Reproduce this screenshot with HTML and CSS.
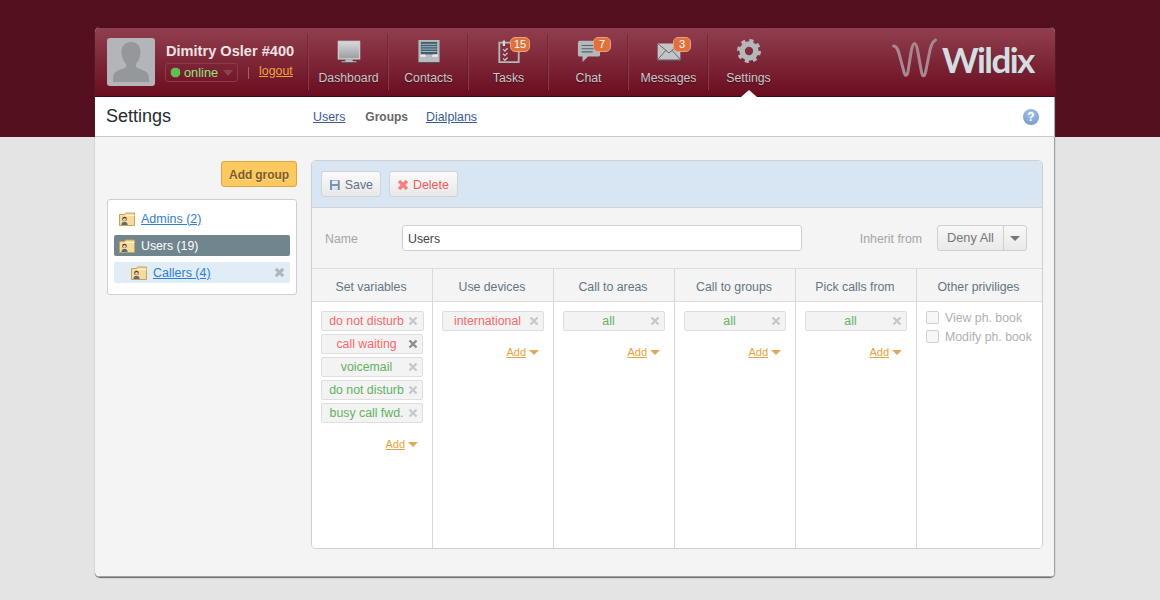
FILE: index.html
```html
<!DOCTYPE html>
<html lang="en">
<head>
<meta charset="utf-8">
<title>Settings</title>
<link rel="stylesheet" href="styles.css">
</head>
<body>
<svg class="defs" width="0" height="0">
  <symbol id="folder" viewBox="0 0 16 14">
    <path d="M.5 2.500h5l1-1.500h9v12.500H.5z" fill="#f5dc9c" stroke="#c4a35a"/>
    <path d="M6.500 3.500h9" stroke="#fff6d8"/>
    <circle cx="5.500" cy="7" r="2.300" fill="#5a3a2a"/>
    <circle cx="5.500" cy="7.500" r="1.500" fill="#f2c9a8"/>
    <path d="M2.300 13c.3-2.500 1.500-3 3.200-3s2.900.5 3.200 3z" fill="#5b6c7a"/>
  </symbol>
  <symbol id="cross" viewBox="0 0 10 10">
    <path d="M1.500 1.500l7 7M8.500 1.500l-7 7" stroke="currentColor" stroke-width="2.400"/>
  </symbol>
  <symbol id="crossb" viewBox="0 0 12 12">
    <path d="M2 2l8 8M10 2l-8 8" stroke="currentColor" stroke-width="3.400"/>
  </symbol>
</svg>
<div class="card">
  <header class="top">
    <div class="avatar">
      <svg width="48" height="48" viewBox="0 0 48 48"><path d="M24 4c6 0 9.500 4 9.500 10 0 5-2 9-4.500 12v3c3 2.500 10 3 12 7 1 2 1 5 1 8H6c0-3 0-6 1-8 2-4 9-4.500 12-7v-3c-2.500-3-4.500-7-4.500-12C14.500 8 18 4 24 4z" fill="#94979b"/></svg>
    </div>
    <div class="user">
      <div class="uname">Dimitry Osler #400</div>
      <div class="ustatus">
        <span class="pill"><i class="dot"></i>online<i class="pcaret"></i></span>
        <span class="sep"></span>
        <a class="logout">logout</a>
      </div>
    </div>
    <nav class="nav">
      <a class="nitem">
        <span class="nicon"><svg width="24" height="23" viewBox="0 0 26 25"><defs><linearGradient id="s" x1="0" y1="0" x2="0" y2="1"><stop offset="0" stop-color="#d8d9da"/><stop offset="1" stop-color="#9b9c9e"/></linearGradient></defs><rect x="1.500" y="1.500" width="23" height="19" fill="url(#s)" stroke="#c9cdd0" stroke-width="1.500"/><path d="M9 21h8v2h4v1.500H5V23h4z" fill="#b7babd"/><path d="M5 24.500h16" stroke="#4e5a62"/></svg></span>
        <span class="nlabel">Dashboard</span>
      </a>
      <a class="nitem">
        <span class="nicon"><svg width="22" height="23" viewBox="0 0 22 24"><rect y="0" width="22" height="23" fill="#b9bcbf"/><rect x="2.500" y="2" width="17" height="13" fill="#41606e"/><path d="M3 4.500h16M3 7h16M3 9.500h16M3 12h16" stroke="#a7bac3"/><path d="M2 15h5l1 2.500h6l1-2.500h5v2.500H2z" fill="#ecedee"/><path d="M0 23.500h22" stroke="#4e5a62"/></svg></span>
        <span class="nlabel">Contacts</span>
      </a>
      <a class="nitem">
        <span class="nicon"><svg width="22" height="24" viewBox="0 0 23 26"><path d="M1 4h21v21H1z" fill="none" stroke="#b3b7ba" stroke-width="2"/><path d="M6 1.500v6" stroke="#d5d7d9" stroke-width="2.500"/><path d="M5 11l2 2 3-3M5 16l2 2 3-3M5 21l2 2 3-3" fill="none" stroke="#c4c7ca" stroke-width="1.400"/></svg></span>
        <span class="badge badge-wide">15</span>
        <span class="nlabel">Tasks</span>
      </a>
      <a class="nitem">
        <span class="nicon"><svg width="24" height="24" viewBox="0 0 26 26"><path d="M3 2h20q2 0 2 2v13q0 2-2 2H12l-6 6v-6H3q-2 0-2-2V4q0-2 2-2z" fill="#b4b8bb"/><path d="M5 7h14M5 10.500h16M5 14h12" stroke="#4a6470" stroke-width="1.200"/></svg></span>
        <span class="badge">7</span>
        <span class="nlabel">Chat</span>
      </a>
      <a class="nitem">
        <span class="nicon nicon-mail"><svg width="24" height="18" viewBox="0 0 25 19"><rect x=".5" y=".5" width="24" height="17" fill="#c2c4c6"/><path d="M.5.500l12 10 12-10M.5 17.500l9-10M24.500 17.500l-9-10" fill="none" stroke="#5e6468"/><path d="M0 18.500h25" stroke="#4e5a62"/></svg></span>
        <span class="badge">3</span>
        <span class="nlabel">Messages</span>
      </a>
      <a class="nitem nitem-active">
        <span class="nicon"><svg width="24" height="24" viewBox="0 0 26 26"><circle cx="13" cy="13" r="7.500" fill="none" stroke="#b5b8bb" stroke-width="6"/><circle cx="13" cy="13" r="11" fill="none" stroke="#b5b8bb" stroke-width="4" stroke-dasharray="4.300 4.340"/></svg></span>
        <span class="nlabel">Settings</span>
      </a>
    </nav>
    <div class="logo">
      <svg class="logomark" width="46" height="42" viewBox="0 0 46 42"><path d="M2.500 8c3.500 0 5 5 6.500 11l4 15c1.200 4.500 3 4.500 4-.5l3-19c1-6 2-9 3.500-9s2.500 3 3.500 9l3.500 19.500c1 5 3 5 4 .5l4-20c1-6 2-10 6-12.500" fill="none" stroke="#a98790" stroke-width="3" stroke-linecap="round"/></svg>
      <span class="logotext">Wildix</span>
    </div>
  </header>
  <div class="sub">
    <h1 class="title">Settings</h1>
    <a class="slink">Users</a>
    <span class="scur">Groups</span>
    <a class="slink">Dialplans</a>
    <span class="help">?</span>
  </div>
  <main class="main">
    <aside class="side">
      <div class="sidetop"><button class="addgroup">Add group</button></div>
      <ul class="tree">
        <li class="node"><svg class="fold"><use href="#folder"/></svg><a class="nlink">Admins (2)</a></li>
        <li class="node node-sel"><svg class="fold"><use href="#folder"/></svg>Users (19)</li>
        <li class="node node-child"><svg class="fold"><use href="#folder"/></svg><a class="nlink">Callers (4)</a><svg class="ncross"><use href="#crossb"/></svg></li>
      </ul>
    </aside>
    <section class="panel">
      <div class="tools">
        <button class="tbtn tsave"><svg width="12" height="12" viewBox="0 0 12 12"><path d="M1 1h9l1 1v9H1z" fill="#7d8fb0"/><rect x="3" y="1.500" width="6" height="3.500" fill="#e8edf4"/><rect x="3" y="7" width="6" height="4" fill="#dfe5ee"/></svg>Save</button>
        <button class="tbtn tdel"><svg class="delx" width="12" height="12"><use href="#crossb"/></svg>Delete</button>
      </div>
      <div class="namerow">
        <label class="lbl lbl-name">Name</label>
        <div class="inp">Users</div>
        <label class="lbl lbl-inh">Inherit from</label>
        <div class="sel"><span class="seltxt">Deny All</span><span class="selbtn"><i class="selcaret"></i></span></div>
      </div>
      <div class="cols">
        <div class="col">
          <div class="colh">Set variables</div>
          <div class="colb">
            <div class="tag red tag-first"><span class="tt">do not disturb</span><svg class="x"><use href="#cross"/></svg></div>
            <div class="tag red"><span class="tt">call waiting</span><svg class="x x-hover"><use href="#cross"/></svg></div>
            <div class="tag green"><span class="tt">voicemail</span><svg class="x"><use href="#cross"/></svg></div>
            <div class="tag green"><span class="tt">do not disturb</span><svg class="x"><use href="#cross"/></svg></div>
            <div class="tag green"><span class="tt">busy call fwd.</span><svg class="x"><use href="#cross"/></svg></div>
            <div class="add"><a class="addl">Add</a><i class="addc"></i></div>
          </div>
        </div>
        <div class="col">
          <div class="colh">Use devices</div>
          <div class="colb">
            <div class="tag red"><span class="tt">international</span><svg class="x"><use href="#cross"/></svg></div>
            <div class="add"><a class="addl">Add</a><i class="addc"></i></div>
          </div>
        </div>
        <div class="col">
          <div class="colh">Call to areas</div>
          <div class="colb">
            <div class="tag green"><span class="tt">all</span><svg class="x"><use href="#cross"/></svg></div>
            <div class="add"><a class="addl">Add</a><i class="addc"></i></div>
          </div>
        </div>
        <div class="col">
          <div class="colh">Call to groups</div>
          <div class="colb">
            <div class="tag green"><span class="tt">all</span><svg class="x"><use href="#cross"/></svg></div>
            <div class="add"><a class="addl">Add</a><i class="addc"></i></div>
          </div>
        </div>
        <div class="col">
          <div class="colh">Pick calls from</div>
          <div class="colb">
            <div class="tag green"><span class="tt">all</span><svg class="x"><use href="#cross"/></svg></div>
            <div class="add"><a class="addl">Add</a><i class="addc"></i></div>
          </div>
        </div>
        <div class="col col-last">
          <div class="colh">Other priviliges</div>
          <div class="colb colb-last">
            <div class="chk"><i class="box"></i>View ph. book</div>
            <div class="chk"><i class="box"></i>Modify ph. book</div>
          </div>
        </div>
      </div>
    </section>
  </main>
</div>
</body>
</html>
```
FILE: styles.css
```css
* { box-sizing: border-box; }
html, body { margin: 0; height: 600px; overflow: hidden; }
body {
  background: linear-gradient(#55101f 137px, #e4e4e4 137px);
  font: 12.3px "Liberation Sans", Arial, sans-serif;
  color: #333;
  padding-top: 27px;
}
.defs { position: absolute; }
.card {
  width: 960px;
  height: 550px;
  margin: 0 0 0 95px;
  background: #f4f4f4;
  border-radius: 5px;
  box-shadow: 0 1px 1px #666;
  overflow: hidden;
}
.top {
  height: 70px;
  display: flex;
  align-items: flex-start;
  background: linear-gradient(#903f4e, #6a0d20);
  border-bottom: 1px solid #3e0a15;
  border-top: 1px solid #4a0f1c;
  padding: 10px 0 0 12px;
  position: relative;
}
.avatar {
  width: 48px;
  height: 48px;
  border-radius: 3px;
  background: #b3b5b9;
  overflow: hidden;
  flex: none;
}
.user { width: 153px; padding: 5px 0 0 10px; flex: none; }
.uname { color: #eee2e3; font-weight: bold; font-size: 14.6px; line-height: 16px; margin-left: 1px; white-space: nowrap; }
.ustatus { display: flex; align-items: center; margin-top: 4px; }
.pill {
  width: 73px;
  height: 19px;
  border: 1px solid #8e3a4b;
  border-radius: 3px;
  color: #8ee67c;
  font-size: 12.8px;
  line-height: 17px;
  display: flex;
  align-items: center;
  padding-left: 5px;
}
.dot {
  width: 9px;
  height: 9px;
  border-radius: 50%;
  background: #59c24f;
  margin-right: 4px;
  box-shadow: 0 0 1px #c5f0b8;
  flex: none;
}
.pcaret {
  width: 0;
  height: 0;
  margin: 1px 0 0 5px;
  border: 5px solid transparent;
  border-top: 6px solid #8d4150;
  border-bottom: 0;
}
.sep { width: 1px; height: 12px; background: #a0606c; margin: 0 10px; }
.logout { color: #eda63a; text-decoration: underline; font-size: 12.4px; margin-top: -3px; }
.nav { display: flex; margin-top: -4px; flex: none; }
.nitem {
  width: 80px;
  height: 56px;
  position: relative;
  border-left: 1px solid #8a3c4c;
  box-shadow: -1px 0 0 rgba(60, 5, 20, .25);
  color: #c6cbcd;
  text-align: center;
  display: flex;
  flex-direction: column;
  align-items: center;
}
.nicon { height: 24px; margin-top: 5px; display: flex; align-items: center; justify-content: center; }
.nicon-mail { padding-top: 2px; }
.nicon svg { display: block; }
.nlabel { position: absolute; top: 37px; left: 0; right: 0; text-shadow: 0 1px 1px rgba(40, 0, 10, .6); }
.nitem-active::after {
  content: "";
  position: absolute;
  left: 32px;
  top: 56px;
  border: 8px solid transparent;
  border-bottom: 7px solid #fff;
  border-top: 0;
}
.badge {
  position: absolute;
  left: 44px;
  top: 3px;
  min-width: 18px;
  height: 15px;
  padding: 0 3px;
  background: #df713d;
  border: 1px solid #eaa07c;
  border-radius: 5px;
  color: #fff;
  font-size: 11px;
  line-height: 13px;
  text-align: center;
}
.badge-wide { left: 41px; min-width: 20px; padding: 0 2px; }
.logo { position: absolute; left: 796px; top: 10px; display: flex; align-items: center; height: 42px; }
.logomark { display: block; margin-right: 5px; }
.logotext { color: #d9dbe0; font-family: Lato, "Liberation Sans", sans-serif; font-size: 35px; font-weight: bold; letter-spacing: -1.600px; line-height: 42px; text-shadow: 1px 1px 0 #4a3640; }
.sub {
  height: 40px;
  background: #fff;
  border-bottom: 1px solid #c8c8c8;
  box-shadow: inset -1px 0 0 #b0b0b0;
  display: flex;
  align-items: center;
  padding: 0 16px 0 11px;
}
.title { margin: 0; width: 207px; font-size: 18px; font-weight: normal; color: #222c30; }
.slink { color: #3b5a96; text-decoration: underline; margin-right: 20px; font-size: 12.4px; }
.scur { color: #666; font-weight: bold; margin-right: 18px; font-size: 12px; }
.help {
  margin-left: auto;
  width: 16px;
  height: 16px;
  border-radius: 50%;
  background: radial-gradient(circle at 50% 30%, #a9c4e8, #6a92c8);
  color: #fff;
  font-weight: bold;
  font-size: 12px;
  line-height: 16px;
  text-align: center;
}
.main { display: flex; height: 440px; padding: 23px 12px 0; align-items: flex-start; box-shadow: inset -1px -1px 0 #a0a0a0; }
.side { width: 190px; flex: none; margin-right: 14px; }
.sidetop { display: flex; justify-content: flex-end; margin: 1px 0 12px; }
.addgroup {
  width: 76px;
  height: 26px;
  padding: 1px 0 0;
  background: #fcc860;
  border: 1px solid #e2a63f;
  border-radius: 3px;
  color: #7f5a22;
  font: bold 12px "Liberation Sans", Arial, sans-serif;
  letter-spacing: -.1px;
  text-shadow: 0 1px 0 #ffe3a8;
}
.tree {
  list-style: none;
  margin: 0;
  height: 96px;
  padding: 8px 6px 0;
  background: #fff;
  border: 1px solid #cfcfcf;
  border-radius: 3px;
}
.node {
  height: 21px;
  margin-bottom: 6px;
  border-radius: 2px;
  display: flex;
  align-items: center;
  padding-left: 5px;
  position: relative;
}
.fold { width: 16px; height: 14px; margin-right: 6px; flex: none; }
.nlink { color: #2f7ed0; text-decoration: underline; font-size: 12.5px; }
.node-sel { background: #70858e; color: #fff; }
.node-child { background: #e0ecf6; padding-left: 17px; }
.ncross { position: absolute; right: 5px; top: 5px; width: 11px; height: 11px; color: #b0b6ba; }
.panel {
  width: 732px;
  height: 389px;
  margin-top: 0;
  background: #f4f4f4;
  border: 1px solid #cfcfcf;
  border-radius: 5px;
  overflow: hidden;
}
.tools {
  height: 47px;
  background: #d7e6f2;
  border-bottom: 1px solid #d3d3d3;
  display: flex;
  padding: 10px 9px 0;
}
.tbtn {
  height: 26px;
  border: 1px solid #cfd4d8;
  border-radius: 3px;
  background: linear-gradient(#fafafa, #e8e8e8);
  font: 12.4px "Liberation Sans", Arial, sans-serif;
  display: flex;
  align-items: center;
  padding: 1px 7px 0;
  margin-right: 8px;
}
.tbtn svg { margin-right: 4px; }
.tsave { width: 60px; color: #66708a; }
.tdel { width: 69px; color: #f15a5a; }
.delx { color: #f58080; }
.namerow { height: 60px; display: flex; align-items: center; padding: 0 15px 0 13px; }
.lbl { color: #a5a5a5; margin-top: 1px; }
.lbl-name { width: 77px; }
.inp {
  width: 400px;
  height: 26px;
  background: #fff;
  border: 1px solid #cfcfcf;
  border-radius: 3px;
  padding: 0 6px 0 5px;
  line-height: 26px;
  color: #444;
}
.lbl-inh { margin-left: auto; margin-right: 15px; }
.sel {
  width: 90px;
  height: 26px;
  border: 1px solid #cfcfcf;
  border-radius: 3px;
  background: linear-gradient(#f8f8f8, #e9e9e9);
  display: flex;
  align-items: center;
  color: #777;
}
.seltxt { width: 66px; text-align: center; border-right: 1px solid #cfcfcf; line-height: 24px; font-size: 12.8px; }
.selbtn { flex: 1; display: flex; justify-content: center; }
.selcaret { border: 5px solid transparent; border-top: 5px solid #777; border-bottom: 0; width: 0; height: 0; }
.cols { display: flex; height: 280px; border-top: 1px solid #dcdcdc; }
.col { width: 121px; border-right: 1px solid #d8d8d8; display: flex; flex-direction: column; }
.col-last { width: 125px; border-right: 0; }
.colh {
  height: 33px;
  border-bottom: 1px solid #dcdcdc;
  text-align: center;
  line-height: 37px;
  color: #64757e;
  padding-right: 2px;
}
.colb { flex: 1; background: #fff; padding: 9px 8px 0 9px; }
.tag {
  width: 102px;
  height: 20px;
  margin-bottom: 3px;
  background: #f3f3f3;
  border: 1px solid #dedede;
  border-radius: 2px;
  display: flex;
  align-items: center;
  position: relative;
}
.tag-first { width: 103px; }
.tt { width: 89px; text-align: center; white-space: nowrap; }
.red { color: #f66a6a; }
.green { color: #62b262; }
.x { position: absolute; right: 4px; top: 4px; width: 10px; height: 10px; color: #c3c9cd; }
.tag-first .x { right: 5px; }
.x-hover { color: #8d8d8d; }
.add { display: flex; justify-content: flex-end; align-items: center; margin-top: 13px; padding-right: 6px; font-size: 11px; height: 16px; }
.addl { color: #e2a43e; text-decoration: underline; margin-right: 3px; }
.addc { width: 0; height: 0; border: 5.500px solid transparent; border-top: 5px solid #e2a85a; border-bottom: 0; }
.colb-last { padding: 6px 0 0 9px; }
.chk { display: flex; align-items: center; height: 19px; color: #b0b0b0; white-space: nowrap; }
.box { width: 13px; height: 13px; border: 1px solid #cfcfcf; border-radius: 2px; background: #f7f7f7; margin-right: 6px; flex: none; }
```
